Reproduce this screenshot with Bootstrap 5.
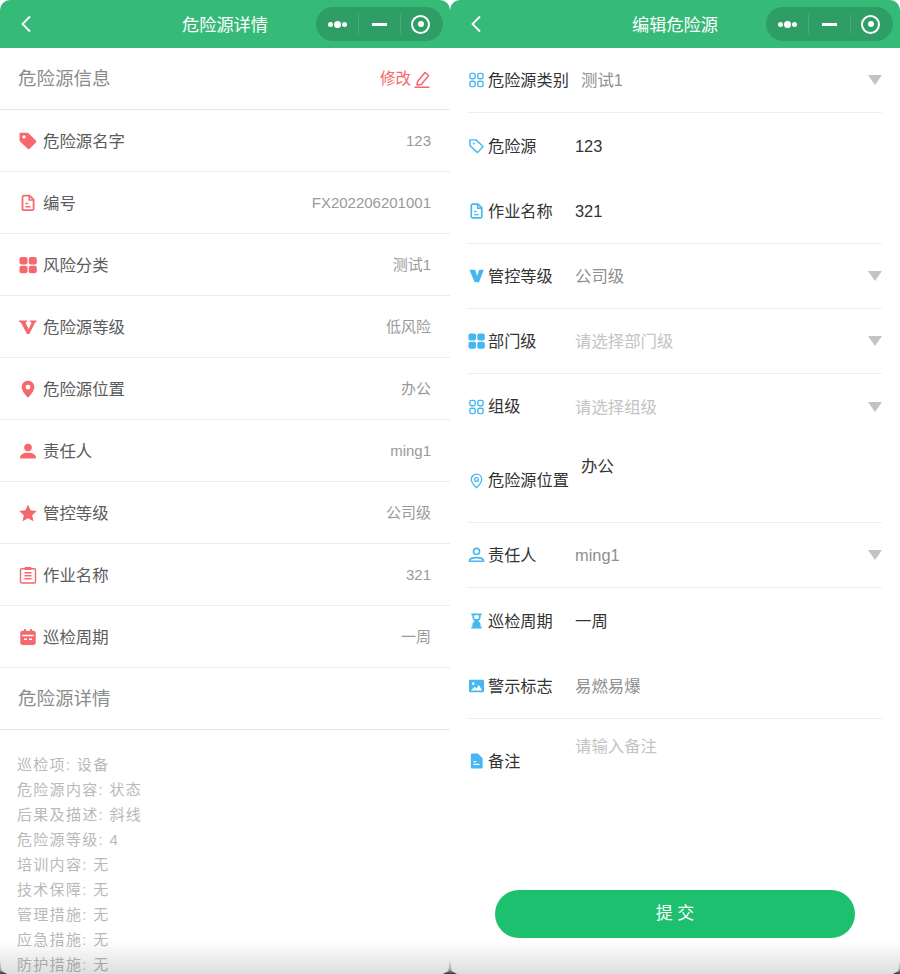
<!DOCTYPE html>
<html lang="zh">
<head>
<meta charset="UTF-8">
<title>危险源</title>
<link href="https://cdn.jsdelivr.net/npm/bootstrap@5.3.0/dist/css/bootstrap.min.css" rel="stylesheet">
<script src="https://cdn.jsdelivr.net/npm/bootstrap@5.3.0/dist/js/bootstrap.bundle.min.js"></script>
<style>
body { width: 900px; height: 974px; overflow: hidden; background: #fff; font-family: "Liberation Sans", "Noto Sans CJK SC", sans-serif; }
.shell { width: 900px; height: 974px; position: relative; overflow: hidden; }
.pane { width: 450px; height: 974px; flex: none; overflow: hidden; }
.topbar { height: 48px; background: #36ba78; border-radius: 10px 10px 0 0; padding: 0 7px 0 20px; color: #fff; position: relative; }
.topbar-title { position: absolute; left: 0; right: 0; top: 13px; text-align: center; font-size: 17.2px; line-height: 24px; }
.capsule { width: 127px; height: 34px; border-radius: 17px; background: #2f9e66; position: relative; }
.capsule-cell { height: 20px; }
.capsule-cell + .capsule-cell { border-left: 1px solid #48aa79; }
.cell-more { width: 42px; gap: 1px; }
.cell-min { width: 42px; padding-right: 1px; }
.cell-close { width: 43px; padding-right: 3px; }
.dot { width: 5px; height: 5px; border-radius: 50%; background: #fff; }
.dot-big { width: 7px; height: 7px; }
.dash { width: 15px; height: 3px; background: #fff; }
.ringer { width: 19px; height: 19px; border: 2.5px solid #fff; border-radius: 50%; }
.ringer-in { width: 6px; height: 6px; background: #fff; border-radius: 50%; }

.info-head { height: 62px; padding: 0 19px 0 18px; border-bottom: 1px solid #e6e6e6; font-size: 18.5px; color: #8b8b8b; }
.edit-link { color: #f4686e; font-size: 15.5px; }
.edit-link .ico { margin-left: 2px; }
.info-row { height: 62px; padding: 0 19px; border-bottom: 1px solid #ececec; font-size: 16.4px; color: #5c5c5c; }
.info-row span { padding-top: 1px; }
.ico { width: 18px; height: 18px; flex: none; display: block; }
.info-row .ico { margin-right: 6px; color: #f4686e; }
.info-val { font-size: 15px; color: #9a9a9a; }
.detail-list { padding: 22px 17px 0; font-size: 15px; letter-spacing: 1.3px; line-height: 25px; color: #b9b9b9; }

.form-body { padding: 0 18px; }
.form-row { height: 65px; font-size: 16.2px; color: #333; }
.form-row.ruled { border-bottom: 1px solid #eeeeee; }
.form-row.open-row { height: 66px; }
.form-row.tall { height: 84px; }
.form-row .ico { margin-right: 3px; color: #45b8ef; width: 17px; }
.lbl { width: 87px; flex: none; }
.val { font-size: 16.4px; color: #333; flex: 1; padding-top: 1px; }
.val-gray { color: #8f8f8f; }
.val-hint { color: #c4c4c4; }
.val-shift { padding-left: 6px; }
.val-up { align-self: flex-start; padding-top: 15px; }
.val-note { align-self: flex-start; padding-top: 15px; }
.tri { width: 0; height: 0; border-left: 7.5px solid transparent; border-right: 7.5px solid transparent; border-top: 10px solid #c3c3c3; }
.submit-btn { width: 360px; height: 48px; border-radius: 24px; background: #1cc06e; color: #fff; border: 0; font-size: 17px; margin: 87px 0 0 45px; display: block; }
.submit-btn:hover { background: #1cc06e; color: #fff; }

.fade-foot { position: absolute; left: 0; right: 0; bottom: 0; height: 34px; background: linear-gradient(to bottom, rgba(0,0,0,0), rgba(0,0,0,.13)); pointer-events: none; }
.notch { position: absolute; bottom: 0; width: 14px; height: 15px; background: linear-gradient(to bottom, #ddd, #aaa 70%, #333); clip-path: polygon(50% 0, 62% 80%, 100% 100%, 0 100%, 38% 80%); }
.notch-a { left: -7px; }
.notch-b { left: 443px; }
.notch-c { left: 893px; }
</style>
</head>
<body>
<svg width="0" height="0" class="position-absolute">
  <symbol id="i-tag" viewBox="1.500 1.500 15.500 15.500"><path fill="currentColor" d="M2 2.200h6.600c.5 0 1 .2 1.300.5l6 6c.6.6.6 1.500 0 2.100l-5 5c-.6.6-1.500.6-2.100 0l-6.200-6a2 2 0 0 1-.6-1.400zM5.800 4.400a1.400 1.400 0 1 0 0 2.800 1.400 1.400 0 0 0 0-2.800z"/></symbol>
  <symbol id="i-tag-o" viewBox="0 0 18 18"><path fill="none" stroke="currentColor" stroke-width="1.500" stroke-linejoin="round" d="M2 2.500h6.500l7.500 7-6 6.500-8-7.500z"/><circle cx="6" cy="6.400" r="1" fill="currentColor"/></symbol>
  <symbol id="i-doc" viewBox="0 0 18 18"><path fill="none" stroke="currentColor" stroke-width="1.800" stroke-linejoin="round" d="M3.500 3.200c0-.9.6-1.500 1.500-1.500h5.600l4 4v9c0 .9-.6 1.500-1.500 1.500H5c-.9 0-1.500-.6-1.500-1.500z"/><path fill="none" stroke="currentColor" stroke-width="1.500" d="M10.200 2v4h4.200M6.500 9.500h2.600M6.500 12.800h5"/></symbol>
  <symbol id="i-grid" viewBox="0 0 18 18"><g fill="currentColor"><rect x=".5" y="1" width="8" height="7.400" rx="2"/><rect x="9.800" y="1" width="8" height="7.400" rx="2"/><rect x=".5" y="9.800" width="8" height="7.400" rx="2"/><rect x="9.800" y="9.800" width="8" height="7.400" rx="2"/></g></symbol>
  <symbol id="i-grid-o" viewBox="0 0 18 18"><g fill="none" stroke="currentColor" stroke-width="1.500"><rect x="2" y="2" width="5.600" height="5.600" rx="1.800"/><rect x="10.400" y="2" width="5.600" height="5.600" rx="1.800"/><rect x="2" y="10.400" width="5.600" height="5.600" rx="1.800"/><rect x="10.400" y="10.400" width="5.600" height="5.600" rx="1.800"/></g></symbol>
  <symbol id="i-vee" viewBox="0 0 18 18"><path fill="currentColor" d="M0 2.500h8v1.300L6.400 4.500l3.300 6.700 2.900-6.700-1.700-.7V2.500h6.600v1.300L16 4.700 10.300 16H8L2 4.700 0 3.800z"/></symbol>
  <symbol id="i-vee-b" viewBox="0 0 18 18"><path fill="currentColor" d="M1.500 2.500h6.200l2 6.800 2-6.800h5l-5 13H7z"/></symbol>
  <symbol id="i-pin" viewBox="0 0 18 18"><path fill="currentColor" fill-rule="evenodd" d="M9 .8c3.600 0 6.300 2.700 6.300 6.300 0 3.700-3.500 7.800-5.500 9.800-.5.4-1.100.4-1.600 0-2-2-5.500-6.100-5.500-9.800C2.700 3.500 5.400.8 9 .8zm0 4a2.400 2.400 0 1 0 0 4.800 2.400 2.400 0 0 0 0-4.800z"/></symbol>
  <symbol id="i-pin-o" viewBox="0 0 18 18"><path fill="none" stroke="currentColor" stroke-width="1.400" d="M9 1.800c3.200 0 5.500 2.400 5.500 5.400 0 3.300-3.200 6.800-5.500 8.900-2.300-2.100-5.500-5.600-5.500-8.900C3.500 4.200 5.800 1.800 9 1.800z"/><circle cx="9" cy="7.400" r="2" fill="none" stroke="currentColor" stroke-width="1.400"/></symbol>
  <symbol id="i-user" viewBox="0 0 18 18"><g fill="currentColor"><circle cx="9" cy="5.500" r="3.800"/><path d="M1 15.700c0-2.900 2.800-5 8-5s8 2.100 8 5c0 .4-.3.800-.7.800H1.700c-.4 0-.7-.4-.7-.8z"/></g></symbol>
  <symbol id="i-user-o" viewBox="0 0 18 18"><g fill="none" stroke="currentColor" stroke-width="1.700"><circle cx="9" cy="5.200" r="3.200"/><path d="M1.500 15.600c0-2.400 2.700-3.800 7.500-3.800s7.500 1.400 7.500 3.800z"/></g></symbol>
  <symbol id="i-star" viewBox="0 0 18 18"><path fill="currentColor" d="M9 .6l2.600 5.700 6.200.7-4.600 4.200 1.300 6.100L9 14.200l-5.500 3.100 1.300-6.100L.2 7l6.200-.7z"/></symbol>
  <symbol id="i-clip" viewBox="0 0 18 18"><g fill="none" stroke="currentColor" stroke-width="1.400"><rect x="1.500" y="2.800" width="15" height="14.200" rx="1.500"/><path d="M5.500 6.800h7M5.500 9.800h7M5.500 12.800h7"/></g><rect x="5.500" y="1" width="7" height="3" rx="1" fill="currentColor"/></symbol>
  <symbol id="i-cal" viewBox="0 0 18 18"><path fill="currentColor" fill-rule="evenodd" d="M5 1h1.800v1.800h4.400V1H13v1.800h1.500c1.300 0 2.200.9 2.200 2.200v9.800c0 1.300-.9 2.200-2.200 2.200h-11c-1.300 0-2.200-.9-2.200-2.200V5c0-1.300.9-2.200 2.200-2.200H5zM3.300 6.800v1.400h11.400V6.800zM5 10.500v1.500h3v-1.500zm5 0v1.500h3v-1.500z"/></symbol>
  <symbol id="i-glass" viewBox="0 0 18 18"><path fill="currentColor" fill-rule="evenodd" d="M3.500 1h11v1.800h-1.200v2.700c0 1.500-1.300 2.700-2.600 3.500 1.300.8 2.600 2 2.600 3.500v2.700h1.200V17h-11v-1.800h1.200v-2.700c0-1.500 1.300-2.700 2.600-3.500-1.300-.8-2.600-2-2.600-3.500V2.800H3.500zm3 1.800v2.700c0 .5.300 1 .8 1.400h3.400c.5-.4.800-.9.800-1.400V2.800z"/></symbol>
  <symbol id="i-pic" viewBox="0 0 18 18"><path fill="currentColor" fill-rule="evenodd" d="M2.200 2.500h13.600c.7 0 1.200.5 1.200 1.200v10.600c0 .7-.5 1.200-1.200 1.200H2.200c-.7 0-1.200-.5-1.200-1.200V3.700c0-.7.500-1.200 1.200-1.200zM3 13.700h12L11.500 8l-2.700 3.600-1.600-1.700zM5.500 5a1.500 1.500 0 1 0 0 3 1.500 1.500 0 0 0 0-3z"/></symbol>
  <symbol id="i-file" viewBox="0 0 18 18"><path fill="currentColor" fill-rule="evenodd" d="M4.500 1h6l5 5v9.500c0 .9-.6 1.500-1.500 1.500H4.500c-.9 0-1.500-.6-1.500-1.500v-13C3 1.600 3.600 1 4.500 1zM5.800 9v1.300h3V9zm0 3v1.300h6.400V12z"/></symbol>
  <symbol id="i-pen" viewBox="0 0 18 18"><path fill="none" stroke="currentColor" stroke-width="1.500" stroke-linejoin="round" d="M4.500 11.500l7.500-9 3.700 3-7.500 9-4.200.6z"/><path stroke="currentColor" stroke-width="1.600" d="M1.500 17.300h15"/></symbol>
  <symbol id="i-back" viewBox="0 0 12 18"><path fill="none" stroke="currentColor" stroke-width="1.800" d="M10 1.500L2.500 9l7.500 7.500"/></symbol>
</svg>

<div class="shell d-flex">
  <!-- detail page -->
  <div class="pane">
    <div class="topbar d-flex align-items-center justify-content-between">
      <svg class="position-relative" width="12" height="18" viewBox="0 0 12 18"><use href="#i-back"/></svg>
      <div class="topbar-title">危险源详情</div>
      <div class="capsule d-flex align-items-center">
        <div class="capsule-cell cell-more d-flex align-items-center justify-content-center"><span class="dot"></span><span class="dot dot-big"></span><span class="dot"></span></div>
        <div class="capsule-cell cell-min d-flex align-items-center justify-content-center"><span class="dash"></span></div>
        <div class="capsule-cell cell-close d-flex align-items-center justify-content-center"><span class="ringer d-flex align-items-center justify-content-center"><span class="ringer-in"></span></span></div>
      </div>
    </div>
    <div class="info-head d-flex align-items-center justify-content-between">
      <span>危险源信息</span>
      <span class="edit-link d-flex align-items-center">修改<svg class="ico"><use href="#i-pen"/></svg></span>
    </div>
    <div class="info-row d-flex align-items-center"><svg class="ico"><use href="#i-tag"/></svg><span class="flex-grow-1">危险源名字</span><span class="info-val">123</span></div>
    <div class="info-row d-flex align-items-center"><svg class="ico"><use href="#i-doc"/></svg><span class="flex-grow-1">编号</span><span class="info-val">FX202206201001</span></div>
    <div class="info-row d-flex align-items-center"><svg class="ico"><use href="#i-grid"/></svg><span class="flex-grow-1">风险分类</span><span class="info-val">测试1</span></div>
    <div class="info-row d-flex align-items-center"><svg class="ico"><use href="#i-vee"/></svg><span class="flex-grow-1">危险源等级</span><span class="info-val">低风险</span></div>
    <div class="info-row d-flex align-items-center"><svg class="ico"><use href="#i-pin"/></svg><span class="flex-grow-1">危险源位置</span><span class="info-val">办公</span></div>
    <div class="info-row d-flex align-items-center"><svg class="ico"><use href="#i-user"/></svg><span class="flex-grow-1">责任人</span><span class="info-val">ming1</span></div>
    <div class="info-row d-flex align-items-center"><svg class="ico"><use href="#i-star"/></svg><span class="flex-grow-1">管控等级</span><span class="info-val">公司级</span></div>
    <div class="info-row d-flex align-items-center"><svg class="ico"><use href="#i-clip"/></svg><span class="flex-grow-1">作业名称</span><span class="info-val">321</span></div>
    <div class="info-row d-flex align-items-center"><svg class="ico"><use href="#i-cal"/></svg><span class="flex-grow-1">巡检周期</span><span class="info-val">一周</span></div>
    <div class="info-head d-flex align-items-center"><span>危险源详情</span></div>
    <div class="detail-list">
      <div>巡检项: 设备</div>
      <div>危险源内容: 状态</div>
      <div>后果及描述: 斜线</div>
      <div>危险源等级: 4</div>
      <div>培训内容: 无</div>
      <div>技术保障: 无</div>
      <div>管理措施: 无</div>
      <div>应急措施: 无</div>
      <div>防护措施: 无</div>
    </div>
  </div>

  <!-- edit page -->
  <div class="pane">
    <div class="topbar d-flex align-items-center justify-content-between">
      <svg class="position-relative" width="12" height="18" viewBox="0 0 12 18"><use href="#i-back"/></svg>
      <div class="topbar-title">编辑危险源</div>
      <div class="capsule d-flex align-items-center">
        <div class="capsule-cell cell-more d-flex align-items-center justify-content-center"><span class="dot"></span><span class="dot dot-big"></span><span class="dot"></span></div>
        <div class="capsule-cell cell-min d-flex align-items-center justify-content-center"><span class="dash"></span></div>
        <div class="capsule-cell cell-close d-flex align-items-center justify-content-center"><span class="ringer d-flex align-items-center justify-content-center"><span class="ringer-in"></span></span></div>
      </div>
    </div>
    <div class="form-body">
      <div class="form-row ruled d-flex align-items-center"><svg class="ico"><use href="#i-grid-o"/></svg><span class="lbl">危险源类别</span><span class="val val-gray val-shift">测试1</span><span class="tri"></span></div>
      <div class="form-row open-row d-flex align-items-center"><svg class="ico"><use href="#i-tag-o"/></svg><span class="lbl">危险源</span><span class="val">123</span></div>
      <div class="form-row ruled d-flex align-items-center"><svg class="ico"><use href="#i-doc"/></svg><span class="lbl">作业名称</span><span class="val">321</span></div>
      <div class="form-row ruled d-flex align-items-center"><svg class="ico"><use href="#i-vee-b"/></svg><span class="lbl">管控等级</span><span class="val val-gray">公司级</span><span class="tri"></span></div>
      <div class="form-row ruled d-flex align-items-center"><svg class="ico"><use href="#i-grid"/></svg><span class="lbl">部门级</span><span class="val val-hint">请选择部门级</span><span class="tri"></span></div>
      <div class="form-row d-flex align-items-center"><svg class="ico"><use href="#i-grid-o"/></svg><span class="lbl">组级</span><span class="val val-hint">请选择组级</span><span class="tri"></span></div>
      <div class="form-row tall ruled d-flex align-items-center"><svg class="ico"><use href="#i-pin-o"/></svg><span class="lbl">危险源位置</span><span class="val val-up val-shift">办公</span></div>
      <div class="form-row ruled d-flex align-items-center"><svg class="ico"><use href="#i-user-o"/></svg><span class="lbl">责任人</span><span class="val val-gray">ming1</span><span class="tri"></span></div>
      <div class="form-row open-row d-flex align-items-center"><svg class="ico"><use href="#i-glass"/></svg><span class="lbl">巡检周期</span><span class="val">一周</span></div>
      <div class="form-row ruled d-flex align-items-center"><svg class="ico"><use href="#i-pic"/></svg><span class="lbl">警示标志</span><span class="val val-gray">易燃易爆</span></div>
      <div class="form-row tall d-flex align-items-center"><svg class="ico"><use href="#i-file"/></svg><span class="lbl">备注</span><span class="val val-hint val-note">请输入备注</span></div>
    </div>
    <button type="button" class="btn submit-btn">提 交</button>
  </div>

  <div class="fade-foot"></div>
  <span class="notch notch-a"></span>
  <span class="notch notch-b"></span>
  <span class="notch notch-c"></span>
</div>
</body>
</html>
